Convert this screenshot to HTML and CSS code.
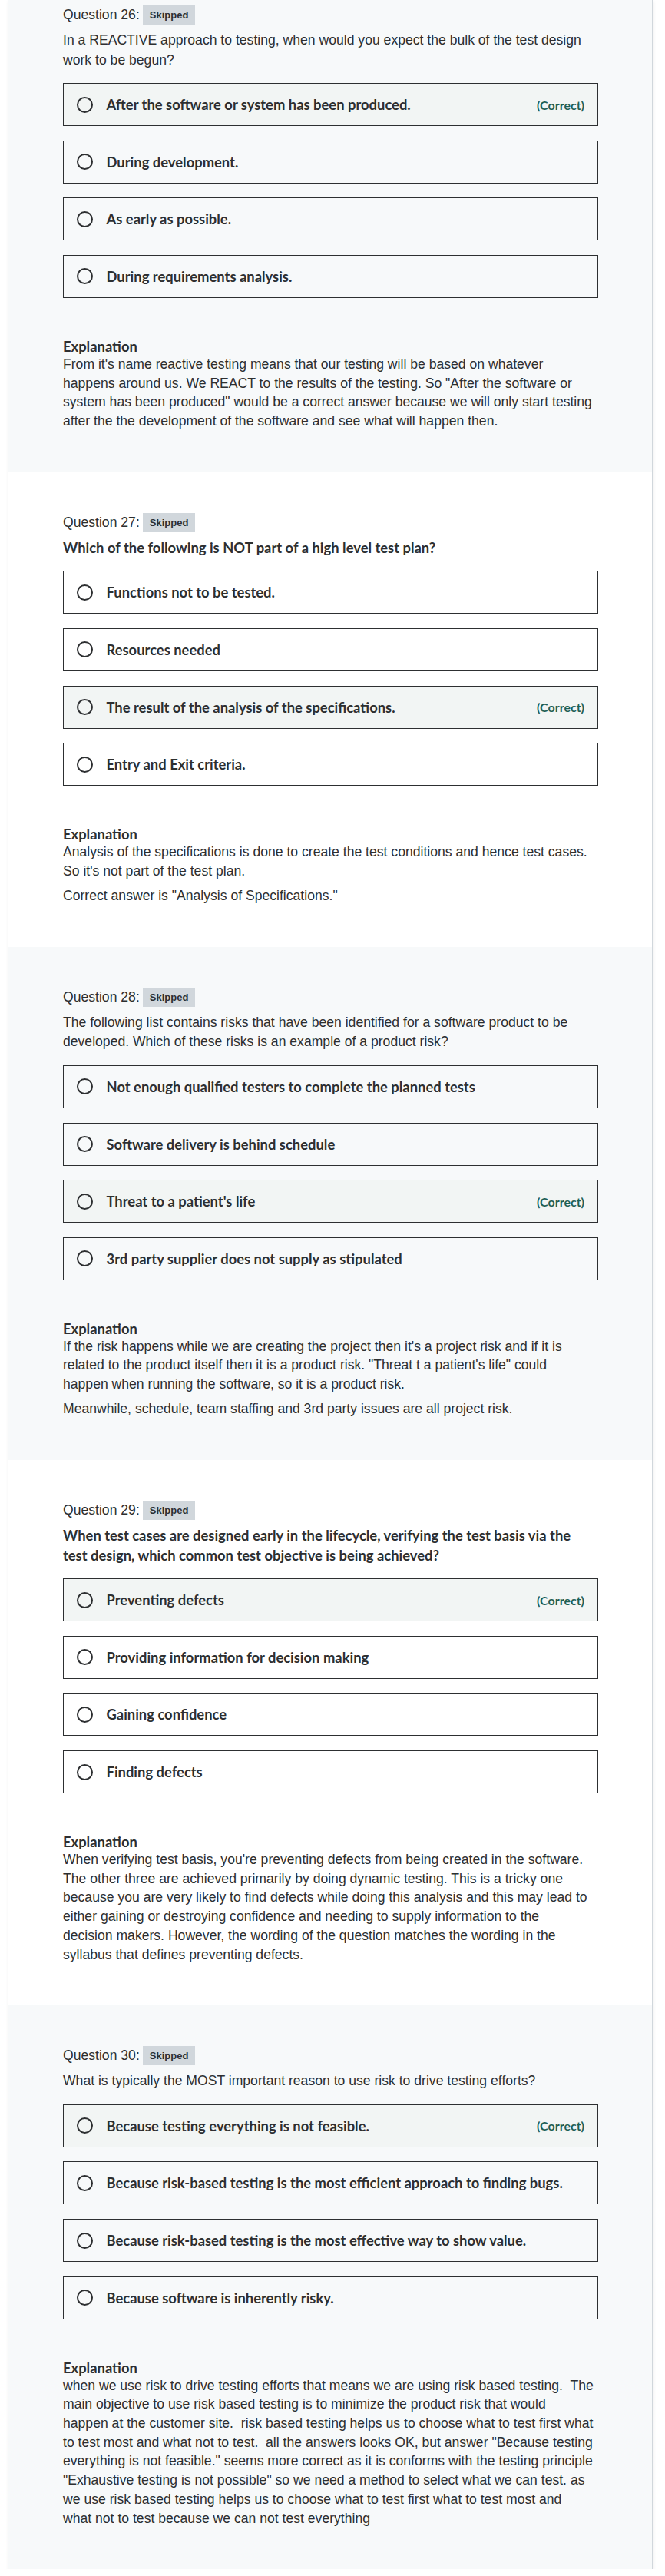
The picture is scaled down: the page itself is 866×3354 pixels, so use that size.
FILE: index.html
```html
<!DOCTYPE html>
<html lang="en">
<head>
<meta charset="utf-8">
<title>Quiz review</title>
<link rel="stylesheet" href="styles.css">
</head>
<body>
<div class="card">

  <section class="q grey first">
    <div class="qhead"><span>Question 26:</span><span class="badge">Skipped</span></div>
    <div class="qtext">In a REACTIVE approach to testing, when would you expect the bulk of the test design work to be begun?</div>
    <div class="options">
      <div class="opt correct"><span class="radio"></span><span class="otext">After the software or system has been produced.</span><span class="tag">(Correct)</span></div>
      <div class="opt"><span class="radio"></span><span class="otext">During development.</span></div>
      <div class="opt"><span class="radio"></span><span class="otext">As early as possible.</span></div>
      <div class="opt"><span class="radio"></span><span class="otext">During requirements analysis.</span></div>
    </div>
    <div class="expl">
      <h4>Explanation</h4>
      <p>From it's name reactive testing means that our testing will be based on whatever happens around us. We REACT to the results of the testing. So "After the software or system has been produced" would be a correct answer because we will only start testing after the the development of the software and see what will happen then.</p>
    </div>
  </section>

  <section class="q">
    <div class="qhead"><span>Question 27:</span><span class="badge">Skipped</span></div>
    <div class="qtext bold">Which of the following is NOT part of a high level test plan?</div>
    <div class="options">
      <div class="opt"><span class="radio"></span><span class="otext">Functions not to be tested.</span></div>
      <div class="opt"><span class="radio"></span><span class="otext">Resources needed</span></div>
      <div class="opt correct"><span class="radio"></span><span class="otext">The result of the analysis of the specifications.</span><span class="tag">(Correct)</span></div>
      <div class="opt"><span class="radio"></span><span class="otext">Entry and Exit criteria.</span></div>
    </div>
    <div class="expl">
      <h4>Explanation</h4>
      <p>Analysis of the specifications is done to create the test conditions and hence test cases. So it's not part of the test plan.</p>
      <p>Correct answer is "Analysis of Specifications."</p>
    </div>
  </section>

  <section class="q grey">
    <div class="qhead"><span>Question 28:</span><span class="badge">Skipped</span></div>
    <div class="qtext">The following list contains risks that have been identified for a software product to be developed. Which of these risks is an example of a product risk?</div>
    <div class="options">
      <div class="opt"><span class="radio"></span><span class="otext">Not enough qualified testers to complete the planned tests</span></div>
      <div class="opt"><span class="radio"></span><span class="otext">Software delivery is behind schedule</span></div>
      <div class="opt correct"><span class="radio"></span><span class="otext">Threat to a patient's life</span><span class="tag">(Correct)</span></div>
      <div class="opt"><span class="radio"></span><span class="otext">3rd party supplier does not supply as stipulated</span></div>
    </div>
    <div class="expl">
      <h4>Explanation</h4>
      <p>If the risk happens while we are creating the project then it's a project risk and if it is related to the product itself then it is a product risk. "Threat t a patient's life" could happen when running the software, so it is a product risk.</p>
      <p>Meanwhile, schedule, team staffing and 3rd party issues are all project risk.</p>
    </div>
  </section>

  <section class="q">
    <div class="qhead"><span>Question 29:</span><span class="badge">Skipped</span></div>
    <div class="qtext bold">When test cases are designed early in the lifecycle, verifying the test basis via the test design, which common test objective is being achieved?</div>
    <div class="options">
      <div class="opt correct"><span class="radio"></span><span class="otext">Preventing defects</span><span class="tag">(Correct)</span></div>
      <div class="opt"><span class="radio"></span><span class="otext">Providing information for decision making</span></div>
      <div class="opt"><span class="radio"></span><span class="otext">Gaining confidence</span></div>
      <div class="opt"><span class="radio"></span><span class="otext">Finding defects</span></div>
    </div>
    <div class="expl tight">
      <h4>Explanation</h4>
      <p>When verifying test basis, you're preventing defects from being created in the software. The other three are achieved primarily by doing dynamic testing. This is a tricky one because you are very likely to find defects while doing this analysis and this may lead to either gaining or destroying confidence and needing to supply information to the decision makers. However, the wording of the question matches the wording in the syllabus that defines preventing defects.</p>
    </div>
  </section>

  <section class="q grey">
    <div class="qhead"><span>Question 30:</span><span class="badge">Skipped</span></div>
    <div class="qtext">What is typically the MOST important reason to use risk to drive testing efforts?</div>
    <div class="options">
      <div class="opt correct"><span class="radio"></span><span class="otext">Because testing everything is not feasible.</span><span class="tag">(Correct)</span></div>
      <div class="opt"><span class="radio"></span><span class="otext">Because risk-based testing is the most efficient approach to finding bugs.</span></div>
      <div class="opt"><span class="radio"></span><span class="otext">Because risk-based testing is the most effective way to show value.</span></div>
      <div class="opt"><span class="radio"></span><span class="otext">Because software is inherently risky.</span></div>
    </div>
    <div class="expl">
      <h4>Explanation</h4>
      <p>when we use risk to drive testing efforts that means we are using risk based testing.&nbsp; The main objective to use risk based testing is to minimize the product risk that would happen at the customer site.&nbsp; risk based testing helps us to choose what to test first what to test most and what not to test.&nbsp; all the answers looks OK, but answer "Because testing everything is not feasible." seems more correct as it is conforms with the testing principle "Exhaustive testing is not possible" so we need a method to select what we can test. as we use risk based testing helps us to choose what to test first what to test most and what not to test because we can not test everything</p>
    </div>
  </section>

</div>
</body>
</html>
```

FILE: styles.css
```css
html, body {
  margin: 0;
  padding: 0;
  background: #ffffff;
}
body {
  font-family: "Liberation Sans", Arial, sans-serif;
  color: #2d2f31;
  font-size: 17.6px;
}
.card {
  width: 840px;
  margin-left: 10px;
  box-sizing: border-box;
  border-left: 1px solid #d1d7dc;
  border-right: 1px solid #d1d7dc;
  box-shadow: 1px 2px 4px rgba(0, 0, 0, 0.08);
}
.q {
  padding: 53px 70px 54px 71px;
  background: #ffffff;
}
.q.grey {
  background: #f7f9fa;
}
.q.first {
  padding-top: 7px;
}
.qhead {
  display: flex;
  align-items: center;
  gap: 4px;
  font-size: 17.6px;
  line-height: 25px;
}
.badge {
  background: #d1d7dc;
  font-weight: 700;
  font-size: 13px;
  height: 25px;
  line-height: 25px;
  padding: 0 9px;
}
.qtext {
  margin-top: 8px;
  padding-right: 6px;
  font-size: 17.6px;
  line-height: 25.6px;
}
.qtext.bold,
.otext,
.tag,
.expl h4 {
  font-family: "Lato", "Liberation Sans", sans-serif;
}
.qtext.bold {
  font-weight: 700;
  font-size: 18.4px;
}
.options {
  margin-top: 17px;
  display: flex;
  flex-direction: column;
  gap: 18.6px;
}
.opt {
  display: flex;
  align-items: center;
  height: 56px;
  box-sizing: border-box;
  border: 1px solid #2d2f31;
  padding: 0 17px 0 16.5px;
}
.opt.correct {
  background: #f2f5f4;
}
.radio {
  width: 21px;
  height: 21px;
  box-sizing: border-box;
  border: 2px solid #2d2f31;
  border-radius: 50%;
  margin-right: 18px;
  flex: none;
}
.otext {
  flex: 1;
  font-weight: 700;
  font-size: 18.4px;
}
.tag {
  color: #1e6055;
  font-weight: 700;
  font-size: 16px;
}
.expl {
  margin-top: 52px;
  padding-right: 6px;
}
.expl.tight {
  padding-right: 7.6px;
}
.expl h4 {
  margin: 0;
  font-size: 18.4px;
  line-height: 22px;
  font-weight: 700;
}
.expl p {
  margin: 0;
  font-size: 17.6px;
  line-height: 24.7px;
}
.expl p + p {
  margin-top: 7.5px;
}
```
